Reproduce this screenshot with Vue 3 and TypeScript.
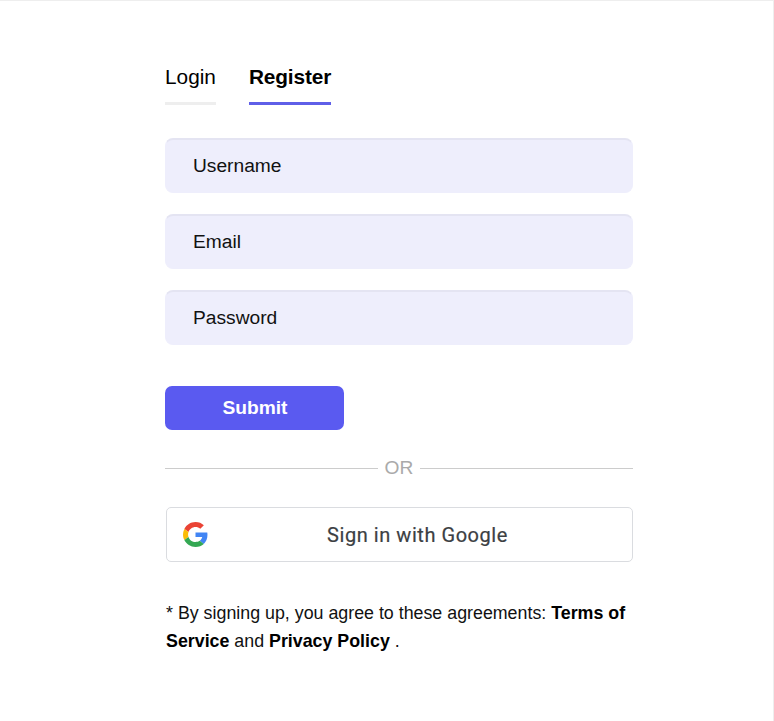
<script setup lang="ts">
const fields: string[] = ['Username', 'Email', 'Password']
</script>

<template>
  <div class="page">
    <div class="form">
      <div class="tabs">
        <div class="tab">Login</div>
        <div class="tab active">Register</div>
      </div>
      <div class="fields">
        <div v-for="f in fields" :key="f" class="field">{{ f }}</div>
      </div>
      <button class="submit" type="button">Submit</button>
      <div class="divider"><span class="line"></span><span class="or">OR</span><span class="line"></span></div>
      <div class="google">
        <svg class="g" viewBox="0 0 48 48" width="25" height="25" aria-hidden="true">
          <path fill="#EA4335" d="M24 9.5c3.54 0 6.71 1.22 9.21 3.6l6.85-6.85C35.9 2.38 30.47 0 24 0 14.62 0 6.51 5.38 2.56 13.22l7.98 6.19C12.43 13.72 17.74 9.5 24 9.5z"/>
          <path fill="#4285F4" d="M46.98 24.55c0-1.57-.15-3.09-.38-4.55H24v9.02h12.94c-.58 2.96-2.26 5.48-4.78 7.18l7.73 6c4.51-4.18 7.09-10.36 7.09-17.65z"/>
          <path fill="#FBBC05" d="M10.53 28.59c-.48-1.45-.76-2.99-.76-4.59s.27-3.14.76-4.59l-7.98-6.19C.92 16.46 0 20.12 0 24c0 3.88.92 7.54 2.56 10.78l7.97-6.19z"/>
          <path fill="#34A853" d="M24 48c6.48 0 11.93-2.13 15.89-5.81l-7.73-6c-2.15 1.45-4.92 2.3-8.16 2.3-6.26 0-11.57-4.22-13.47-9.91l-7.98 6.19C6.51 42.62 14.62 48 24 48z"/>
        </svg>
        <span class="g-text">Sign in with Google</span>
      </div>
      <p class="note">* By signing up, you agree to these agreements: <b>Terms of Service</b> and <b>Privacy Policy</b> .</p>
    </div>
  </div>
</template>

<style scoped>
.page {
  box-sizing: border-box;
  width: 774px;
  height: 721px;
  border-top: 1px solid #eeeeee;
  border-right: 1px solid #eeeeee;
  background: #ffffff;
  padding: 63px 0 0 165px;
  font-family: "Liberation Sans", Arial, sans-serif;
  color: #000000;
}
.form {
  width: 468px;
}
.tabs {
  display: flex;
  gap: 33px;
}
.tab {
  font-size: 20.8px;
  line-height: 26px;
  padding-bottom: 12px;
  border-bottom: 3px solid #eeeeee;
  color: #000000;
}
.tab.active {
  font-weight: 700;
  letter-spacing: -0.12px;
  border-bottom-color: #5f5fe8;
}
.fields {
  display: flex;
  flex-direction: column;
  gap: 21px;
  margin-top: 33px;
}
.field {
  box-sizing: border-box;
  height: 55px;
  display: flex;
  align-items: center;
  padding-left: 27px;
  font-size: 19.2px;
  background: #eeeefc;
  border: 1px solid #eeeefc;
  border-top: 2px solid #e4e4f2;
  border-radius: 8px;
  color: #111111;
}
.submit {
  display: block;
  width: 179px;
  height: 44px;
  margin-top: 41px;
  border: none;
  border-radius: 7px;
  background: #5a5af0;
  color: #ffffff;
  font-family: inherit;
  font-weight: 700;
  font-size: 19.2px;
  padding: 0 0 0 1px;
}
.divider {
  display: flex;
  align-items: center;
  gap: 7px;
  margin-top: 27px;
  height: 22px;
}
.line {
  flex: 1;
  height: 1px;
  background: #cccccc;
}
.or {
  font-size: 19.2px;
  color: #aaaaaa;
}
.google {
  box-sizing: border-box;
  display: flex;
  align-items: center;
  width: 467px;
  height: 55px;
  margin: 28px 0 0 1px;
  padding: 0 5px 0 16px;
  border: 1px solid #dadce0;
  border-radius: 5px;
}
.g {
  flex: none;
}
.g-text {
  flex: 1;
  text-align: center;
  font-family: Roboto, sans-serif;
  font-weight: 400;
  font-size: 20px;
  letter-spacing: 0.55px;
  color: #3c4043;
  -webkit-text-stroke: 0.2px #3c4043;
}
.note {
  margin: 37px 0 0 1px;
  font-size: 17.82px;
  line-height: 28px;
  color: #111111;
}
.note b {
  color: #000000;
}
</style>
